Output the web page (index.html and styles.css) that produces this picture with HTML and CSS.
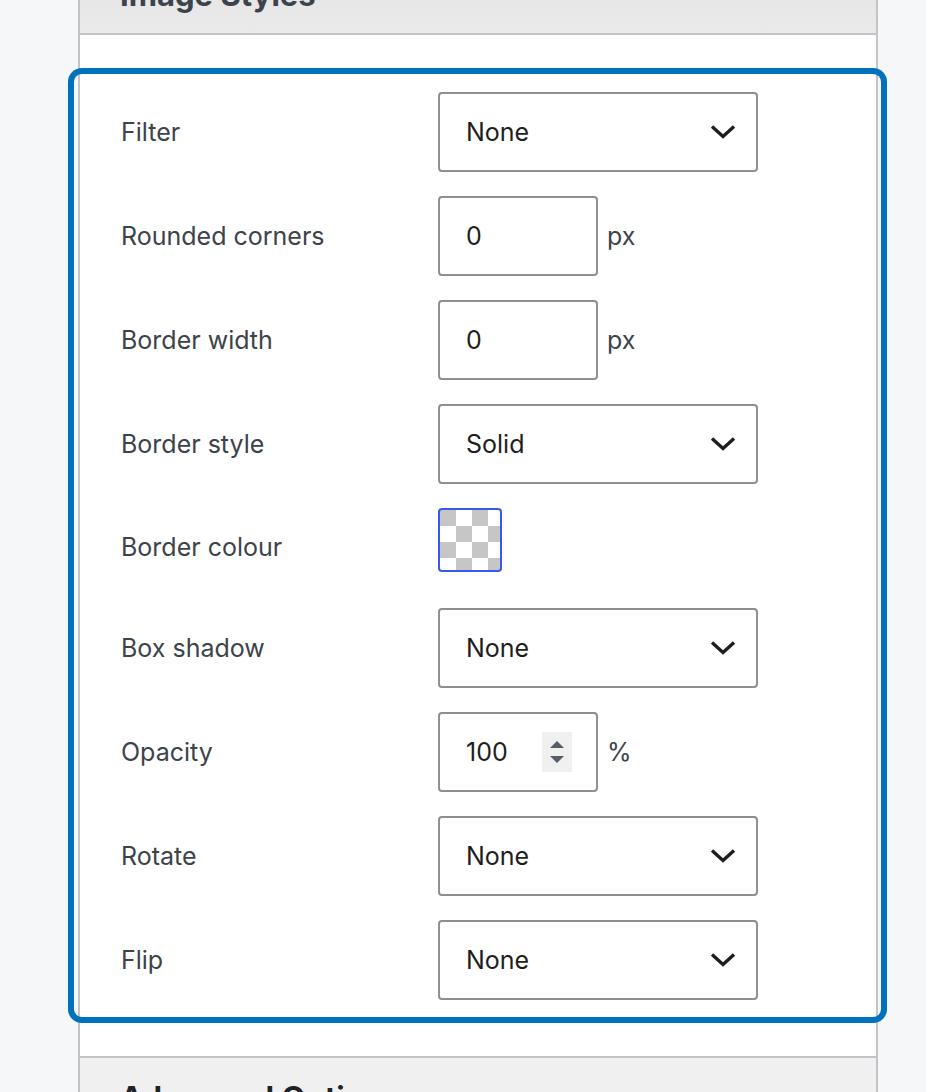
FILE: index.html
```html
<!DOCTYPE html>
<html lang="en">
<head>
<meta charset="utf-8">
<title>Image Styles</title>
<link rel="stylesheet" href="styles.css">
</head>
<body>
<div class="panel">
  <div class="panel-header">Image Styles</div>
  <div class="panel-body">
    <div class="focus-box">
      <div class="row">
        <div class="label">Filter</div>
        <div class="select"><span>None</span><svg class="chev" width="26" height="16" viewBox="0 0 26 16"><polyline points="2,2.5 13,12.5 24,2.5" fill="none" stroke="#1e1e1e" stroke-width="3.4"/></svg></div>
      </div>
      <div class="row">
        <div class="label">Rounded corners</div>
        <div class="num"><span>0</span></div><span class="unit">px</span>
      </div>
      <div class="row">
        <div class="label">Border width</div>
        <div class="num"><span>0</span></div><span class="unit">px</span>
      </div>
      <div class="row">
        <div class="label">Border style</div>
        <div class="select"><span>Solid</span><svg class="chev" width="26" height="16" viewBox="0 0 26 16"><polyline points="2,2.5 13,12.5 24,2.5" fill="none" stroke="#1e1e1e" stroke-width="3.4"/></svg></div>
      </div>
      <div class="row row-colour">
        <div class="label">Border colour</div>
        <div class="swatch"></div>
      </div>
      <div class="row">
        <div class="label">Box shadow</div>
        <div class="select"><span>None</span><svg class="chev" width="26" height="16" viewBox="0 0 26 16"><polyline points="2,2.5 13,12.5 24,2.5" fill="none" stroke="#1e1e1e" stroke-width="3.4"/></svg></div>
      </div>
      <div class="row">
        <div class="label">Opacity</div>
        <div class="num"><span>100</span>
          <span class="spin"><svg width="14" height="24" viewBox="0 0 14 24"><polygon points="0,8 7,1 14,8" fill="#555d66"/><polygon points="0,16 14,16 7,23" fill="#555d66"/></svg></span>
        </div><span class="unit">%</span>
      </div>
      <div class="row">
        <div class="label">Rotate</div>
        <div class="select"><span>None</span><svg class="chev" width="26" height="16" viewBox="0 0 26 16"><polyline points="2,2.5 13,12.5 24,2.5" fill="none" stroke="#1e1e1e" stroke-width="3.4"/></svg></div>
      </div>
      <div class="row">
        <div class="label">Flip</div>
        <div class="select"><span>None</span><svg class="chev" width="26" height="16" viewBox="0 0 26 16"><polyline points="2,2.5 13,12.5 24,2.5" fill="none" stroke="#1e1e1e" stroke-width="3.4"/></svg></div>
      </div>
    </div>
  </div>
  <div class="panel-footer">Advanced Options</div>
</div>
</body>
</html>
```

FILE: styles.css
```css
html, body {
  margin: 0;
  padding: 0;
  background: #f6f7f9;
  overflow: hidden;
  height: 1092px;
}

body {
  font-family: Inter, "Noto Sans", "Liberation Sans", sans-serif;
}

.panel {
  margin: -35px 0 0 78px;
  width: 800px;
  box-sizing: border-box;
  border-left: 2px solid #c3c4c7;
  border-right: 2px solid #c3c4c7;
  background: #ffffff;
}

.panel-header {
  box-sizing: border-box;
  height: 70px;
  padding: 11px 0 0 40px;
  border-bottom: 2px solid #c3c4c7;
  background: linear-gradient(#e3e3e4, #eaeaea);
  font-size: 31px;
  font-weight: 700;
  color: #3c434a;
  line-height: 38px;
  overflow: hidden;
}

.panel-body {
  padding: 39px 0;
}

.focus-box {
  margin: 0 -5px 0 -6px;
  padding: 18px 0 17px 47px;
  border-radius: 8px;
  box-shadow: 0 0 0 6px #0071bc;
  display: flex;
  flex-direction: column;
  gap: 24px;
}

.row {
  display: flex;
  align-items: center;
  height: 80px;
}

.row-colour {
  height: 76px;
  align-items: flex-start;
}

.row-colour .label {
  align-self: center;
  padding-top: 2px;
}

.label {
  width: 317px;
  flex: none;
  font-size: 25px;
  color: #3c434a;
}

.select, .num {
  box-sizing: border-box;
  height: 80px;
  border: 2px solid #8c8f94;
  border-radius: 4px;
  display: flex;
  align-items: center;
  padding-left: 26px;
  font-size: 25px;
  color: #1e1e1e;
  background: #fff;
}

.select {
  width: 320px;
  justify-content: space-between;
  padding-right: 20px;
}

.chev {
  display: block;
}

.num {
  width: 160px;
  justify-content: space-between;
  padding-right: 24px;
}

.spin {
  width: 30px;
  height: 40px;
  background: #f0f0f0;
  display: flex;
  align-items: center;
  justify-content: center;
}

.spin svg {
  display: block;
}

.unit {
  margin-left: 9px;
  font-size: 25px;
  color: #3c434a;
}

.swatch {
  box-sizing: border-box;
  width: 64px;
  height: 64px;
  border: 2px solid #3858e9;
  border-radius: 4px;
  background-color: #fff;
  background-image: conic-gradient(#fff 0 25%, #c6c6c6 0 50%, #fff 0 75%, #c6c6c6 0);
  background-size: 32px 32px;
  background-position: 0 0;
}

.panel-footer {
  border-top: 2px solid #c3c4c7;
  background: #f0f0f1;
  padding: 21px 0 20px 40px;
  font-size: 31px;
  font-weight: 700;
  color: #1d2327;
  line-height: 38px;
}
```
